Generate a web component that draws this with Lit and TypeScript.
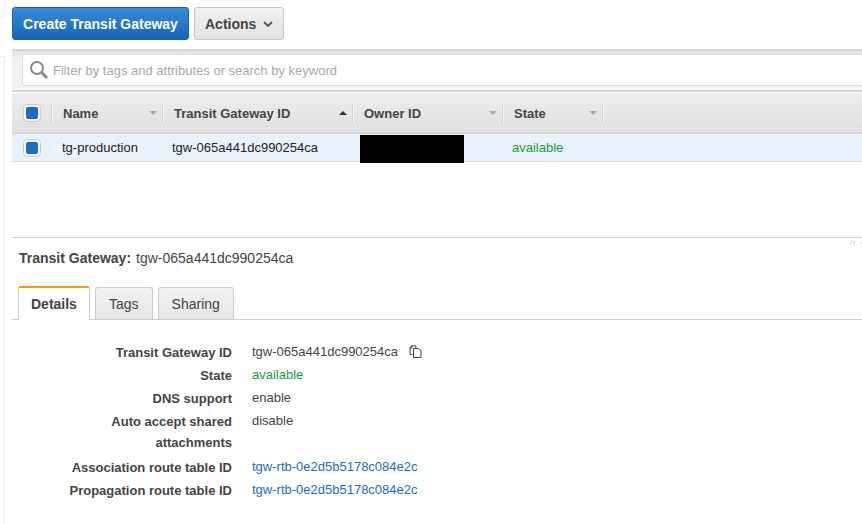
import { LitElement, html, css, svg } from "lit";
import { customElement } from "lit/decorators.js";

const caret = svg`<svg class="caret" width="10" height="6" viewBox="0 0 10 6"><path d="M1 1L5 5L9 1" fill="none" stroke="currentColor" stroke-width="2"/></svg>`;

@customElement("app-root")
export class AppRoot extends LitElement {
  static styles = css`
    :host { display: block; width: 862px; height: 524px; overflow: hidden; background: #fff; font-family: "Liberation Sans", Arial, sans-serif; font-size: 13px; color: #444; position: relative; }
    * { box-sizing: border-box; }
    .page { display: flex; height: 524px; }
    .rail { width: 12px; flex: none; display: flex; flex-direction: column; }
    .rail-top { width: 5px; height: 18px; border-right: 1px solid #eee; border-bottom: 1px solid #eee; }
    .rail-gap { height: 38px; flex: none; }
    .rail-main { width: 5px; flex: 1; border-right: 1px solid #eee; border-top: 1px solid #eee; }
    .main { flex: 1; min-width: 0; display: flex; flex-direction: column; }
    .toolbar { height: 49px; flex: none; padding-top: 7px; display: flex; gap: 5px; align-items: flex-start; }
    .btn { height: 33px; border-radius: 3px; font-weight: 700; font-size: 14px; display: flex; align-items: center; }
    .primary { width: 177px; justify-content: center; color: #fff; background: linear-gradient(#3a8bdc, #1665b8); border: 1px solid #1a5fa8; }
    .secondary { width: 90px; padding-left: 10px; gap: 7px; color: #444; background: linear-gradient(#f2f2f2, #e2e2e2); border: 1px solid #c6c6c6; }
    .caret { color: #555; }
    .filter { height: 43px; flex: none; background: linear-gradient(#e3e3e3, #f2f2f2 20%); border-top: 2px solid #d5d5d5; border-bottom: 2px solid #d2d2d2; padding: 3px 0 0 10px; }
    .input { height: 32px; background: #fff; border: 1px solid #e0e0e0; border-right: 0; border-radius: 3px 0 0 3px; display: flex; align-items: center; padding-left: 6px; gap: 4px; color: #a8a8a8; font-size: 13px; }
    .thead { height: 42px; flex: none; display: flex; align-items: center; background: linear-gradient(#ededed, #e0e0e0); border-top: 1px solid #fff; border-bottom: 1px solid #cfcfcf; font-weight: 700; color: #444; }
    .th { display: flex; align-items: center; height: 19px; border-right: 2px solid #f4f4f4; box-shadow: 1px 0 0 #d4d4d4 inset; }
    .check-cell { width: 40px; padding-left: 10px; display: flex; align-items: center; }
    .cb { width: 18px; height: 18px; border: 1px solid #c9c9c9; border-radius: 4px; background: #f5f5f5; display: flex; align-items: center; justify-content: center; flex: none; }
    .cb i { display: block; width: 12px; height: 12px; border-radius: 2px; background: #1a6cc4; }
    .th { position: static; }
    .col { display: flex; align-items: center; height: 19px; border-right: 1px solid #d2d2d2; padding-left: 11px; justify-content: space-between; padding-right: 5px; box-shadow: 1px 0 0 #f6f6f6; }
    .c0 { width: 40px; height: 19px; display: flex; align-items: center; padding-left: 11px; border-right: 1px solid #d2d2d2; box-shadow: 1px 0 0 #f6f6f6; }
    .c1 { width: 111px; }
    .c2 { width: 189px; }
    .c3 { width: 150px; }
    .c4 { width: 100px; }
    .sort { width: 0; height: 0; border-left: 4px solid transparent; border-right: 4px solid transparent; border-top: 4px solid #aaa; }
    .sort.up { border-top: 0; border-bottom: 4px solid #333; }
    .row { height: 28px; flex: none; display: flex; align-items: center; background: #e9f1fb; border-bottom: 1px solid #d5dce6; color: #222; position: relative; }
    .row > div { flex: none; padding-left: 10px; }
    .r0 { width: 40px; padding-left: 11px !important; }
    .r1 { width: 110px; }
    .r2 { width: 188px; }
    .r3 { width: 152px; }
    .ok { color: #1d9b3f; }
    .redact { position: absolute; left: 348px; top: 1px; width: 104px; height: 28px; background: #000; }
    .spacer { height: 76px; flex: none; border-bottom: 1px solid #d0d0d0; position: relative; }
    .grip { position: absolute; right: -4px; bottom: -7px; display: flex; gap: 6px; }
    .grip i { width: 5px; height: 3px; border: 1px solid #ccc; border-bottom: 0; border-radius: 2px 2px 0 0; }
    .title { height: 48px; flex: none; padding: 12px 0 0 7px; font-size: 14px; display: flex; gap: 5px; }
    .title b { color: #444; }
    .tabs { height: 34px; flex: none; display: flex; align-items: flex-end; gap: 5px; padding-left: 6px; border-bottom: 1px solid #ccc; }
    .tab { height: 32px; padding: 0 13px; border: 1px solid #ccc; border-bottom: 0; border-radius: 3px 3px 0 0; background: linear-gradient(#f2f2f2, #e6e6e6); font-size: 14px; display: flex; align-items: center; }
    .tab.on { height: 34px; width: 72px; padding: 0 12px; margin-bottom: -1px; background: #fff; border-top: 2px solid #f90; font-weight: 700; }
    .details { padding-top: 21px; display: grid; grid-template-columns: 220px 1fr; column-gap: 20px; grid-auto-rows: 23px; }
    .k { text-align: right; font-weight: 700; line-height: 21px; padding-top: 1px; }
    .v { line-height: 21px; display: flex; align-items: center; gap: 11px; height: 21px; }
    .k.two { grid-row: span 1; height: 44px; }
    .tall { height: 44px; grid-row: span 2; line-height: 21px; }
    .link { color: #1a6bbf; }
  `;

  render() {
    return html`<div class="page">
      <div class="rail"><div class="rail-top"></div><div class="rail-gap"></div><div class="rail-main"></div></div>
      <div class="main">
        <div class="toolbar">
          <div class="btn primary">Create Transit Gateway</div>
          <div class="btn secondary">Actions ${caret}</div>
        </div>
        <div class="filter"><div class="input">
          <svg width="20" height="20" viewBox="0 0 20 20"><circle cx="8" cy="8" r="6" fill="none" stroke="#8a8a8a" stroke-width="2"/><path d="M12.5 12.5L18 18" stroke="#8a8a8a" stroke-width="3"/></svg>
          Filter by tags and attributes or search by keyword
        </div></div>
        <div class="thead">
          <div class="c0"><div class="cb"><i></i></div></div>
          <div class="col c1">Name<span class="sort"></span></div>
          <div class="col" style="width:190px">Transit Gateway ID<span class="sort up"></span></div>
          <div class="col" style="width:150px">Owner ID<span class="sort"></span></div>
          <div class="col" style="width:100px">State<span class="sort"></span></div>
        </div>
        <div class="row">
          <div class="r0"><div class="cb"><i></i></div></div>
          <div class="r1">tg-production</div>
          <div class="r2">tgw-065a441dc990254ca</div>
          <div class="r3"></div>
          <div class="ok">available</div>
          <div class="redact"></div>
        </div>
        <div class="spacer"><div class="grip"><i></i><i></i></div></div>
        <div class="title"><b>Transit Gateway:</b> tgw-065a441dc990254ca</div>
        <div class="tabs"><div class="tab on">Details</div><div class="tab">Tags</div><div class="tab">Sharing</div></div>
        <div class="details">
          <div class="k">Transit Gateway ID</div>
          <div class="v">tgw-065a441dc990254ca
            <svg width="13" height="13" viewBox="0 0 13 13" fill="none" stroke="#444"><path d="M3.5 9.5H1V2.5L2.5.8H6.5L7 3"/><path d="M4.5 3.5H9.5L12 5.5V12.5H4.5Z"/><path d="M3 .8V3H1"/></svg></div>
          <div class="k">State</div><div class="v ok">available</div>
          <div class="k">DNS support</div><div class="v">enable</div>
          <div class="k tall">Auto accept shared<br/>attachments</div><div class="v">disable</div>
          <div></div>
          <div class="k">Association route table ID</div><div class="v link">tgw-rtb-0e2d5b5178c084e2c</div>
          <div class="k">Propagation route table ID</div><div class="v link">tgw-rtb-0e2d5b5178c084e2c</div>
        </div>
      </div>
    </div>`;
  }
}
